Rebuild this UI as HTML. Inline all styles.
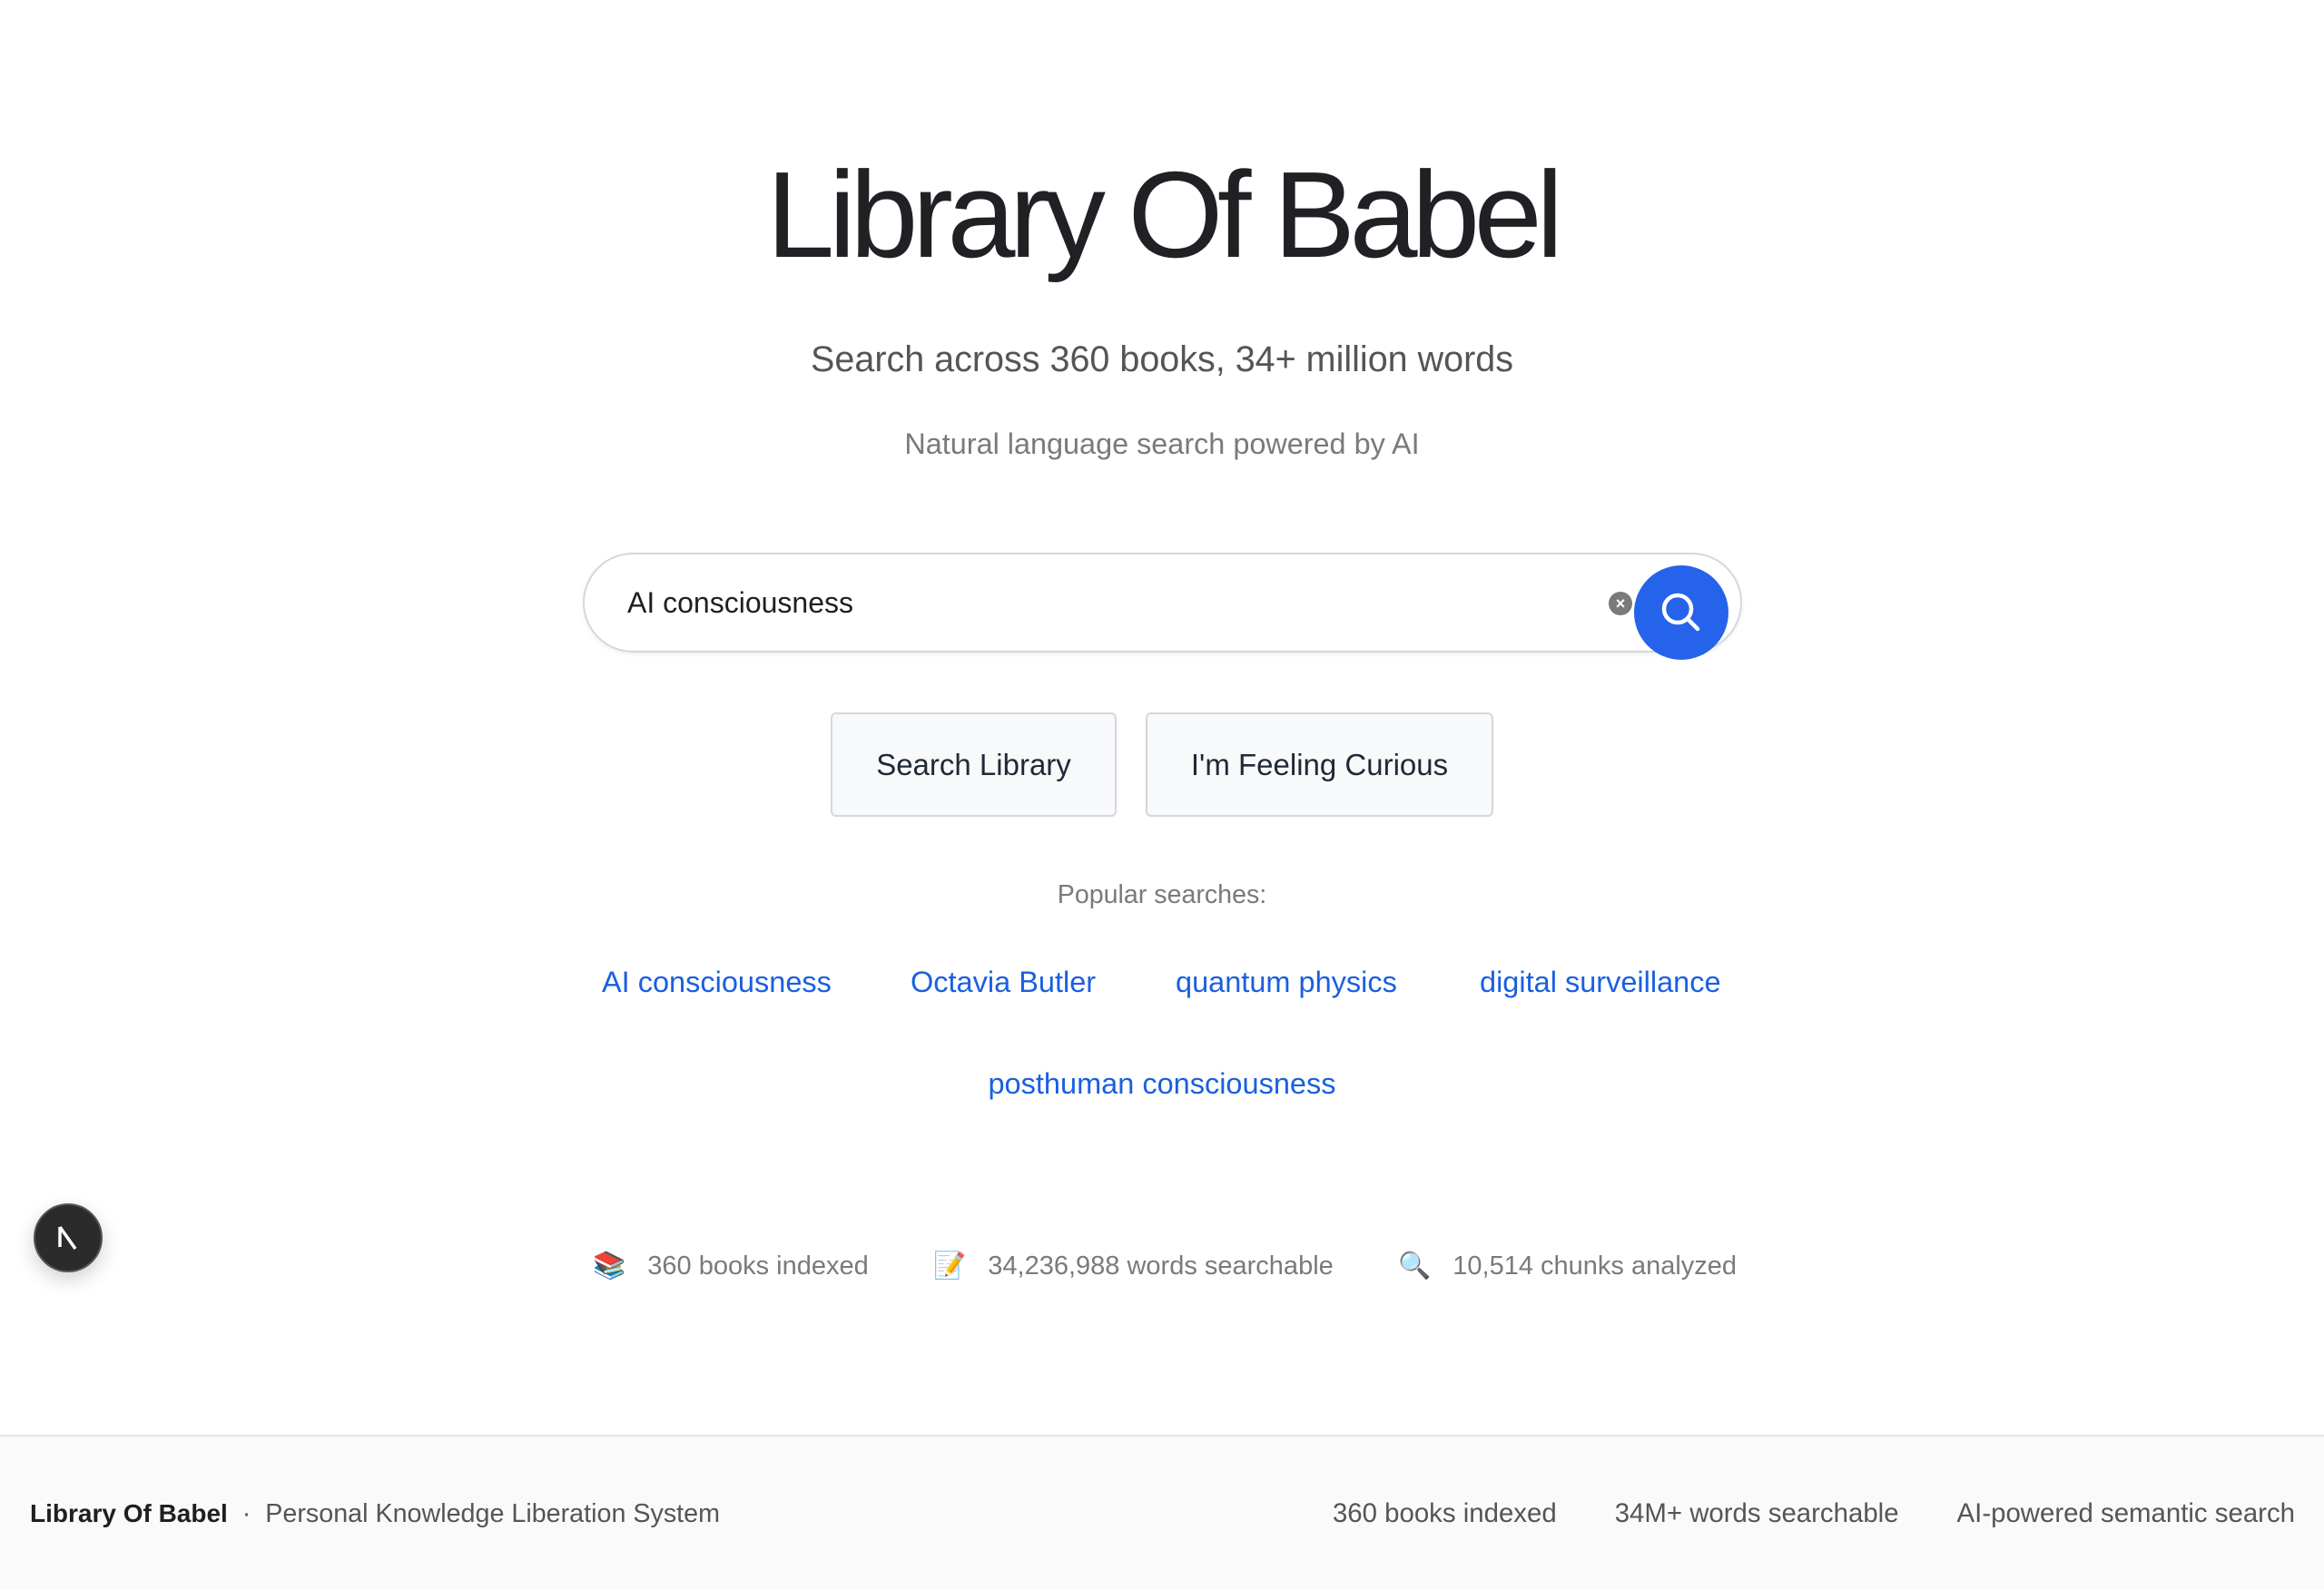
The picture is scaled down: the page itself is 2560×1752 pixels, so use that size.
<!DOCTYPE html>
<html><head><meta charset="utf-8"><style>
*{margin:0;padding:0;box-sizing:border-box}
html,body{width:2560px;height:1752px;overflow:hidden;background:#fff;font-family:"Liberation Sans",Arial,sans-serif}
.a{position:absolute;white-space:nowrap}
.c{left:0;width:2560px;text-align:center}
.link{color:#1a5fe0;font-size:32.5px}
.btn{position:absolute;top:785px;height:115px;background:#f8f9fa;border:2px solid #d4d7dc;border-radius:6px;color:#1f2937;font-size:33px;display:flex;align-items:center;justify-content:center}
.stat{color:#7a7a7a;font-size:29px}
</style></head><body>
<div class="a c" style="top:157px;font-size:135px;line-height:160px;letter-spacing:-6.5px;color:#202124;font-weight:300">Library Of Babel</div>
<div class="a c" style="top:372px;font-size:39.5px;line-height:48px;color:#555">Search across 360 books, 34+ million words</div>
<div class="a c" style="top:469px;font-size:32.4px;line-height:40px;color:#7a7a7a">Natural language search powered by AI</div>

<div class="a" style="left:642px;top:609px;width:1277px;height:110px;border:2px solid #d4d7dc;border-radius:55px;box-shadow:0 2px 6px rgba(0,0,0,0.06)"></div>
<div class="a" style="left:691px;top:644px;font-size:32px;line-height:40px;color:#1f1f1f">AI consciousness</div>
<div class="a" style="left:1772px;top:652px;width:26px;height:26px;border-radius:50%;background:#7a7a7a;color:#fff;font-size:18px;line-height:26px;text-align:center;font-weight:bold">×</div>
<div class="a" style="left:1800px;top:623px;width:104px;height:104px;border-radius:50%;background:#2563eb">
<svg width="104" height="104" viewBox="0 0 104 104"><circle cx="48" cy="48" r="15" fill="none" stroke="#fff" stroke-width="4.5"/><line x1="59" y1="59" x2="70" y2="70" stroke="#fff" stroke-width="4.5" stroke-linecap="round"/></svg></div>

<div class="btn" style="left:915px;width:315px">Search Library</div>
<div class="btn" style="left:1262px;width:383px">I'm Feeling Curious</div>

<div class="a c" style="top:969px;font-size:28.6px;line-height:34px;color:#7a7a7a">Popular searches:</div>
<div class="a link" style="left:663px;top:1063px;line-height:38px">AI consciousness</div>
<div class="a link" style="left:1003px;top:1063px;line-height:38px">Octavia Butler</div>
<div class="a link" style="left:1295px;top:1063px;line-height:38px">quantum physics</div>
<div class="a link" style="left:1630px;top:1063px;line-height:38px">digital surveillance</div>
<div class="a c link" style="top:1175px;line-height:38px">posthuman consciousness</div>

<div class="a" style="left:37px;top:1326px;width:76px;height:76px;border-radius:50%;background:#2b2b2b;border:2px solid #555;box-shadow:0 8px 22px rgba(0,0,0,0.18)">
<svg width="72" height="72" viewBox="0 0 72 72"><line x1="27" y1="24" x2="27" y2="46" stroke="#fff" stroke-width="3.5"/><line x1="27" y1="24" x2="44" y2="48" stroke="#fff" stroke-width="3.5"/></svg></div>

<div class="a stat" style="left:653px;top:1376px;line-height:38px">📚&nbsp;&nbsp;&nbsp;360 books indexed</div>
<div class="a stat" style="left:1028px;top:1376px;line-height:38px">📝&nbsp;&nbsp;&nbsp;34,236,988 words searchable</div>
<div class="a stat" style="left:1540px;top:1376px;line-height:38px">🔍&nbsp;&nbsp;&nbsp;10,514 chunks analyzed</div>

<div class="a" style="left:0;top:1581px;width:2560px;height:171px;background:#fafafa;border-top:2px solid #e5e5e5"></div>
<div class="a" style="left:33px;top:1650px;font-size:28.7px;line-height:36px;color:#555"><b style="color:#1f1f1f;font-size:28px">Library Of Babel</b>&nbsp;&nbsp;·&nbsp;&nbsp;Personal Knowledge Liberation System</div>
<div class="a" style="right:32px;top:1650px;font-size:29.4px;line-height:36px;color:#555">360 books indexed<span style="display:inline-block;width:64px"></span>34M+ words searchable<span style="display:inline-block;width:64px"></span>AI-powered semantic search</div>
</body></html>
